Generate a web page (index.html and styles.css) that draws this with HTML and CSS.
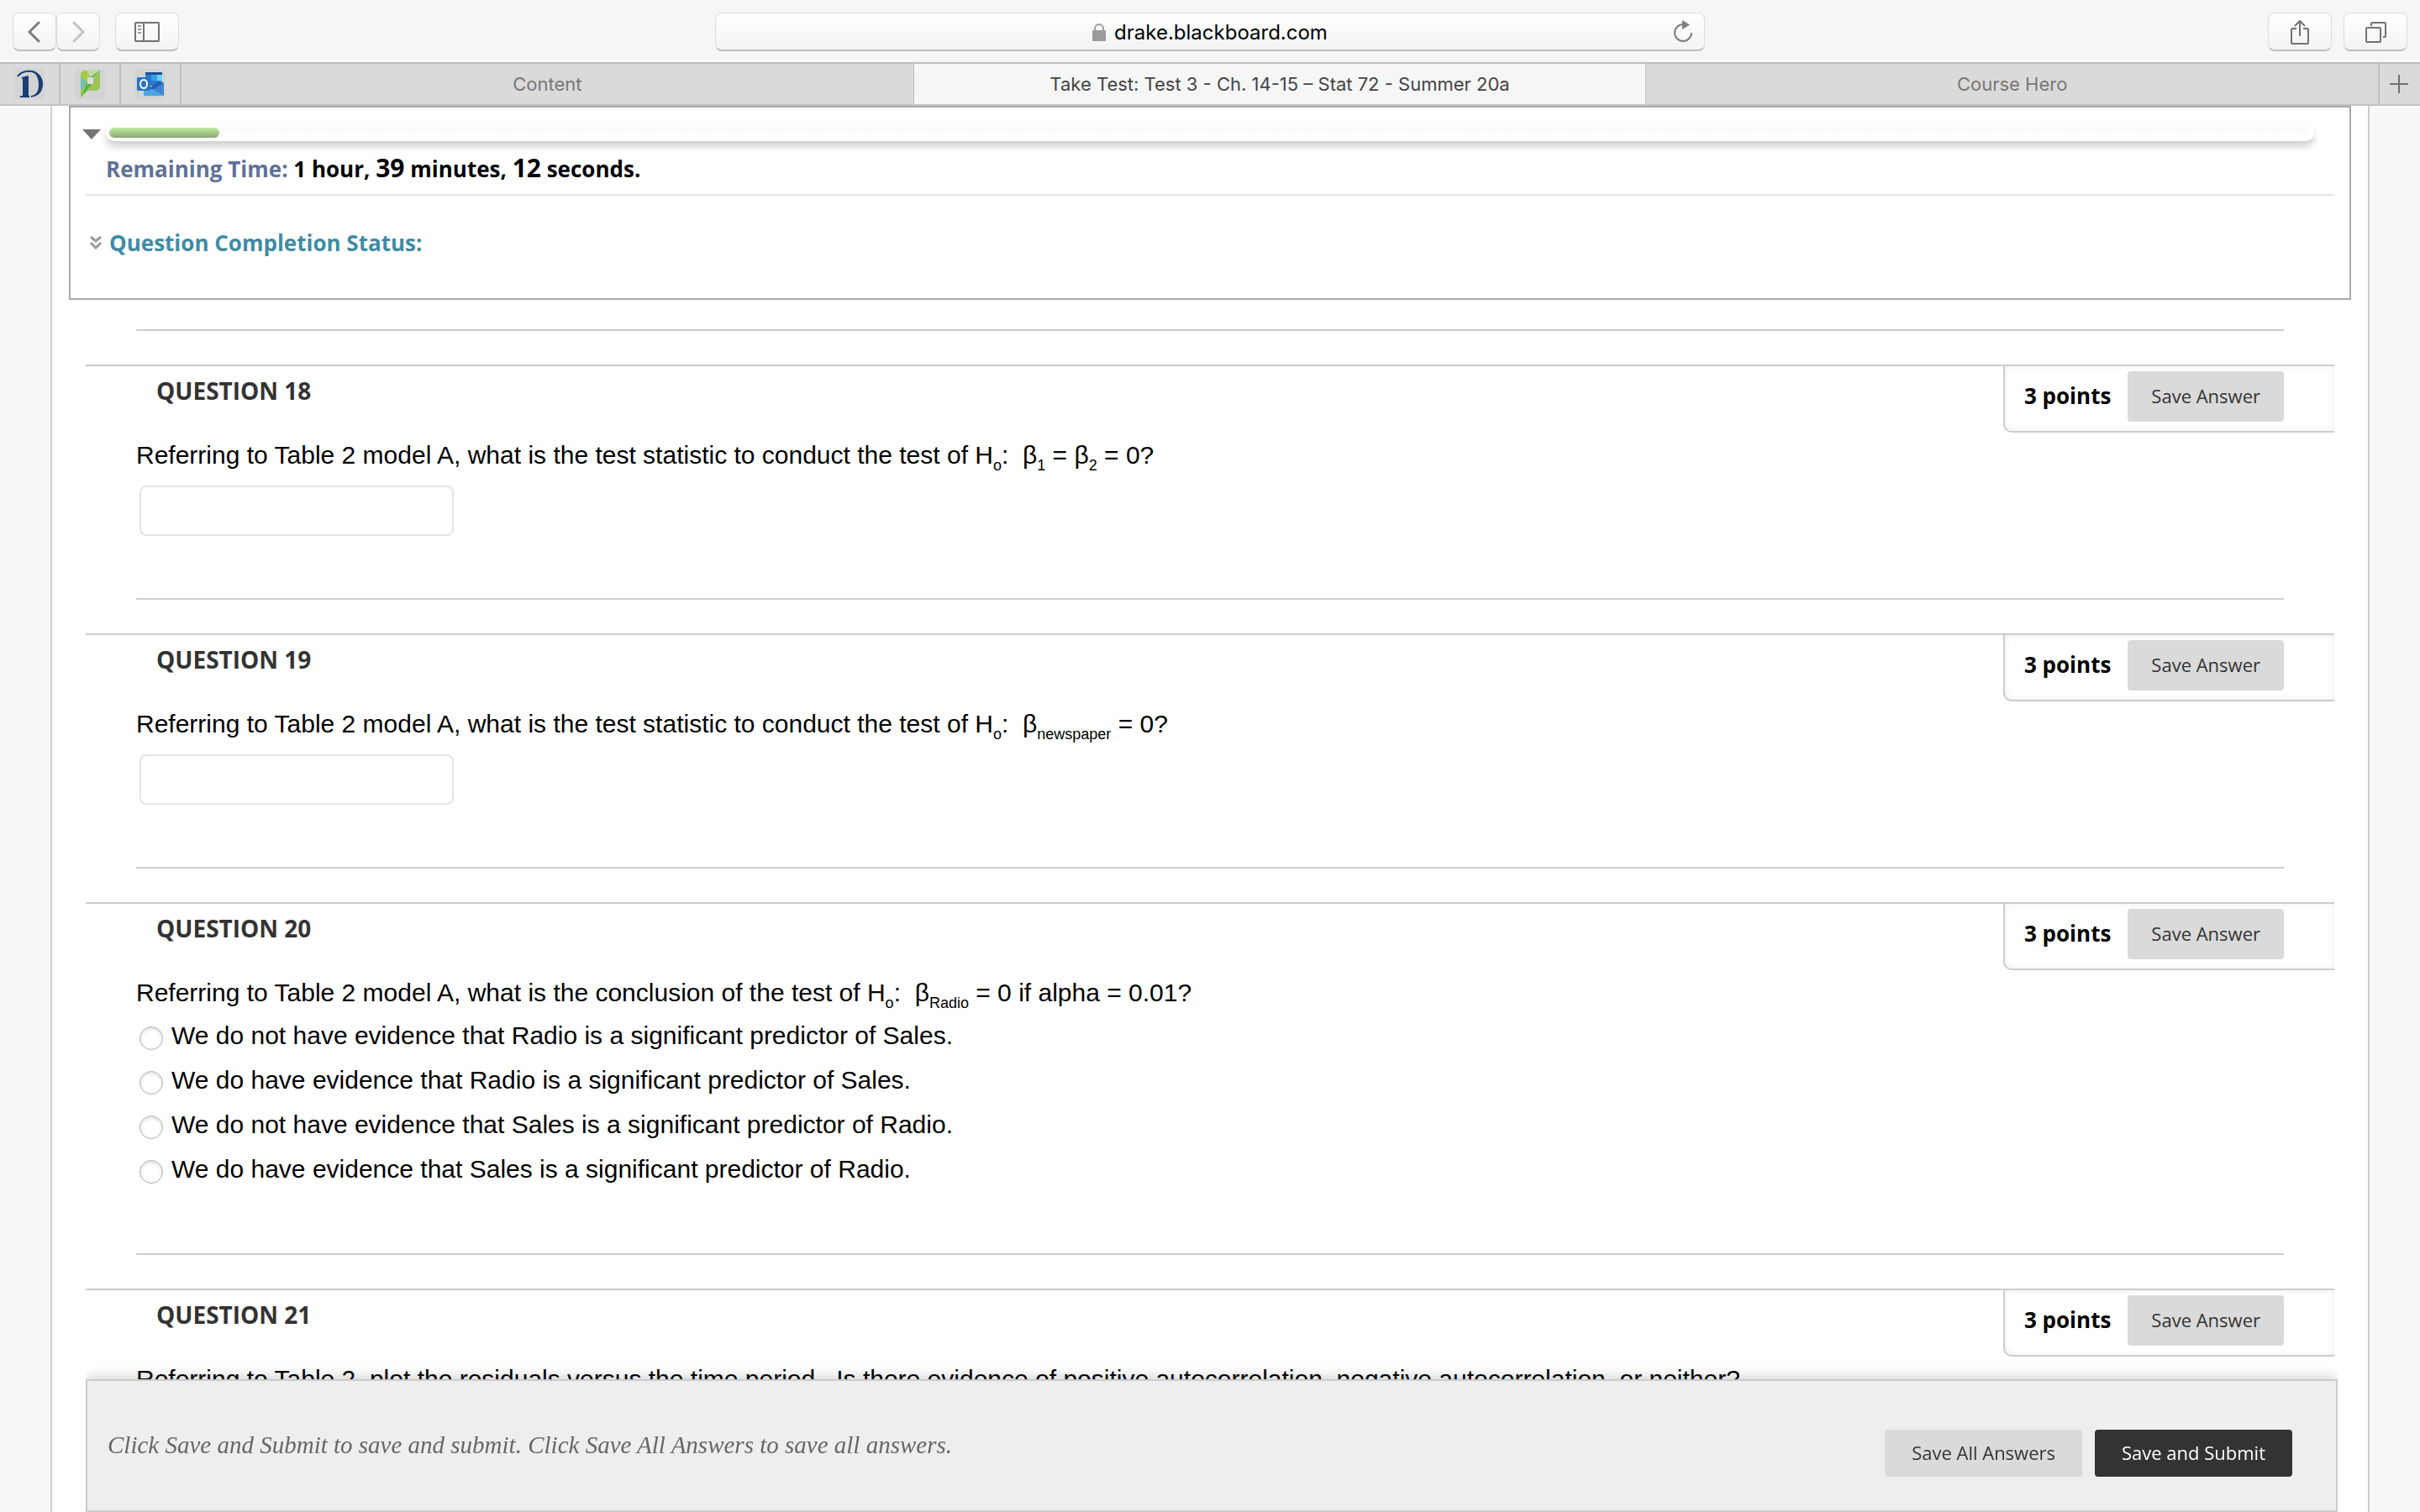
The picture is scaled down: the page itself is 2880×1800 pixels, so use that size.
FILE: index.html
```html
<!DOCTYPE html>
<html lang="en">
<head>
    <meta charset="UTF-8">
    <meta name="viewport" content="width=device-width, initial-scale=1.0">
    <title>Take Test: Test 3 - Ch. 14-15 – Stat 72 - Summer 20a</title>
    <link rel="stylesheet" href="styles.css">
</head>
<body>
    <header class="browser">
        <div class="toolbar">
            <div class="toolbar-side">
                <div class="nav-buttons">
                    <button class="tool-btn small" type="button" aria-label="Back">
                        <svg width="16" height="26" viewBox="0 0 16 26" fill="none" stroke="#7b7b7b" stroke-width="3" stroke-linecap="round" stroke-linejoin="round"><path d="M13 2 2 13l11 11"/></svg>
                    </button>
                    <button class="tool-btn small" type="button" aria-label="Forward">
                        <svg width="16" height="26" viewBox="0 0 16 26" fill="none" stroke="#c2c2c2" stroke-width="3" stroke-linecap="round" stroke-linejoin="round"><path d="M3 2l11 11L3 24"/></svg>
                    </button>
                </div>
                <button class="tool-btn" type="button" aria-label="Sidebar">
                    <svg width="30" height="24" viewBox="0 0 30 24" fill="none" stroke="#727272" stroke-width="2"><rect x="1" y="1" width="28" height="22" rx="1"/><path d="M11 1v22"/><path d="M4 5h4M4 9h4M4 13h4" stroke="#999"/></svg>
                </button>
            </div>
            <div class="address">
                <div class="address-text">
                    <svg width="16" height="22" viewBox="0 0 16 22"><rect x="0" y="8" width="16" height="13" rx="1" fill="#9b9b9b"/><path d="M3 9V6a5 5 0 0 1 10 0v3" fill="none" stroke="#9b9b9b" stroke-width="2"/></svg>
                    <span>drake.blackboard.com</span>
                </div>
                <button class="reload" type="button" aria-label="Reload">
                    <svg width="24" height="28" viewBox="0 0 24 28"><path d="M21 15a10 10 0 1 1-10-10" fill="none" stroke="#7e7e7e" stroke-width="2"/><path d="M10 0l9 5.500-9 5.500z" fill="#7e7e7e"/></svg>
                </button>
            </div>
            <div class="toolbar-side right">
                <button class="tool-btn" type="button" aria-label="Share">
                    <svg width="24" height="32" viewBox="0 0 24 32" fill="none" stroke="#727272" stroke-width="2"><path d="M8 12H3q-1 0-1 1v16q0 1 1 1h18q1 0 1-1V13q0-1-1-1h-5"/><path d="M12 21V3M6 9l6-6 6 6"/></svg>
                </button>
                <button class="tool-btn" type="button" aria-label="Show tabs">
                    <svg width="26" height="26" viewBox="0 0 26 26" fill="none" stroke="#727272" stroke-width="2"><rect x="2" y="8" width="17" height="17" rx="1"/><path d="M8 6V3q0-1 1-1h15q1 0 1 1v15q0 1-1 1h-2"/></svg>
                </button>
            </div>
        </div>
        <nav class="tabs">
            <a class="pinned" href="#" aria-label="Drake">
                <svg width="36" height="36" viewBox="0 0 36 36"><rect width="36" height="36" fill="#d3d3d3"/><rect x="10" y="10" width="7" height="22" fill="#1b3f75"/><path d="M7 33h11M9 11l8-2" stroke="#1b3f75" stroke-width="2"/><path d="M4 9C8 3 16 2 21 3c8 2 12 9 11 17-1 8-6 12-12 13" fill="none" stroke="#1b3f75" stroke-width="2"/><path d="M21 2c9 2 14 10 13 18-1 8-6 13-13 13 6-3 8-8 8-14S27 6 21 2z" fill="#1b3f75"/></svg>
            </a>
            <a class="pinned" href="#" aria-label="Bookmark">
                <svg width="36" height="36" viewBox="0 0 36 36"><rect width="36" height="36" fill="#d3d3d3"/><path d="M7 5l4-3h19v18q0 6-6 6h-9l-8 8z" fill="#9cc653"/><path d="M9 3l9-1-6 12z" fill="#a9c93e"/><path d="M14 2h16L18 10z" fill="#bedb9b"/><path d="M7 10l8 6-8 10z" fill="#74bfae"/><path d="M30 2l-9 8h-3z" fill="#46ab98"/><path d="M7 34l8-18 5 3z" fill="#57b153"/><rect x="15" y="10" width="7" height="8" fill="#ddd"/></svg>
            </a>
            <a class="pinned" href="#" aria-label="Outlook">
                <svg width="36" height="36" viewBox="0 0 36 36"><rect width="36" height="36" fill="#d3d3d3"/><rect x="12" y="4" width="20" height="16" fill="#2d78cc"/><rect x="12" y="4" width="20" height="3" fill="#1b4f96"/><rect x="19" y="7" width="7" height="7" fill="#3d9be8"/><rect x="26" y="7" width="6" height="7" fill="#6bd0fa"/><rect x="26" y="14" width="6" height="5" fill="#3ea5ec"/><path d="M10 18l12 6 12-7v15H10z" fill="#4ea5e2"/><path d="M18 23l16-6v15z" fill="#3a86d0"/><path d="M16 24h6l12-7-6-3-10 8z" fill="#2360ae"/><rect x="2" y="10" width="16" height="16" rx="1" fill="#2a72c9"/><ellipse cx="10" cy="18" rx="4" ry="5" fill="none" stroke="#fff" stroke-width="2"/></svg>
            </a>
            <a class="tab" href="#">Content</a>
            <a class="tab active" href="#">Take Test: Test 3 - Ch. 14-15 – Stat 72 - Summer 20a</a>
            <a class="tab" href="#">Course Hero</a>
            <button class="new-tab" type="button" aria-label="New tab">
                <svg width="22" height="22" viewBox="0 0 22 22" stroke="#707070" stroke-width="2"><path d="M11 0v22M0 11h22"/></svg>
            </button>
        </nav>
    </header>

    <main class="page">
        <section class="timer">
            <div class="timer-bar">
                <button class="toggle" type="button" aria-label="Collapse timer">
                    <svg width="22" height="12" viewBox="0 0 22 12"><path d="M0 0h22L11 12z" fill="#757575"/></svg>
                </button>
                <div class="progress">
                    <div class="progress-fill" style="width: 5%"></div>
                </div>
            </div>
            <p class="remaining"><span class="remaining-label">Remaining Time:</span> 1 hour, <span class="digits">39</span> minutes, <span class="digits">12</span> seconds.</p>
            <a class="status" href="#">
                <svg width="16" height="16" viewBox="0 0 16 16" fill="none" stroke="#999" stroke-width="3"><path d="M2 1l6 5 6-5M2 8l6 6 6-6"/></svg>
                Question Completion Status:
            </a>
        </section>

        <form class="questions" id="test-form">
            <hr class="divider">
            <section class="question">
                <div class="question-head">
                    <h3>QUESTION 18</h3>
                    <div class="points"><strong>3 points</strong><button class="btn" type="button">Save Answer</button></div>
                </div>
                <div class="question-body">
                    <label class="prompt" for="q18">Referring to Table 2 model A, what is the test statistic to conduct the test of H<sub>o</sub>:&nbsp; β<sub>1</sub> = β<sub>2</sub> = 0?</label>
                    <input class="answer" type="text" id="q18">
                </div>
            </section>

            <hr class="divider">
            <section class="question">
                <div class="question-head">
                    <h3>QUESTION 19</h3>
                    <div class="points"><strong>3 points</strong><button class="btn" type="button">Save Answer</button></div>
                </div>
                <div class="question-body">
                    <label class="prompt" for="q19">Referring to Table 2 model A, what is the test statistic to conduct the test of H<sub>o</sub>:&nbsp; β<sub>newspaper</sub> = 0?</label>
                    <input class="answer" type="text" id="q19">
                </div>
            </section>

            <hr class="divider">
            <section class="question">
                <div class="question-head">
                    <h3>QUESTION 20</h3>
                    <div class="points"><strong>3 points</strong><button class="btn" type="button">Save Answer</button></div>
                </div>
                <div class="question-body">
                    <p class="prompt">Referring to Table 2 model A, what is the conclusion of the test of H<sub>o</sub>:&nbsp; β<sub>Radio</sub> = 0 if alpha = 0.01?</p>
                    <div class="options">
                        <div class="option"><input type="radio" name="q20" id="q20-a"><label for="q20-a">We do not have evidence that Radio is a significant predictor of Sales.</label></div>
                        <div class="option"><input type="radio" name="q20" id="q20-b"><label for="q20-b">We do have evidence that Radio is a significant predictor of Sales.</label></div>
                        <div class="option"><input type="radio" name="q20" id="q20-c"><label for="q20-c">We do not have evidence that Sales is a significant predictor of Radio.</label></div>
                        <div class="option"><input type="radio" name="q20" id="q20-d"><label for="q20-d">We do have evidence that Sales is a significant predictor of Radio.</label></div>
                    </div>
                </div>
            </section>

            <hr class="divider">
            <section class="question">
                <div class="question-head">
                    <h3>QUESTION 21</h3>
                    <div class="points"><strong>3 points</strong><button class="btn" type="button">Save Answer</button></div>
                </div>
                <div class="question-body">
                    <p class="prompt">Referring to Table 2, plot the residuals versus the time period.&nbsp; Is there evidence of positive autocorrelation, negative autocorrelation, or neither?</p>
                </div>
            </section>
        </form>
    </main>

    <footer class="submit-bar">
        <p>Click Save and Submit to save and submit. Click Save All Answers to save all answers.</p>
        <div class="submit-buttons">
            <button class="btn" type="button">Save All Answers</button>
            <button class="btn primary" type="submit" form="test-form">Save and Submit</button>
        </div>
    </footer>
</body>
</html>
```
FILE: styles.css
```css
* {
    box-sizing: border-box;
}
body {
    margin: 0;
    height: 100vh;
    display: flex;
    flex-direction: column;
    overflow: hidden;
    background: #f8f8f8;
    color: #000;
    font-family: "Open Sans", sans-serif;
    font-size: 26px;
}
button {
    font-family: inherit;
    cursor: pointer;
}
svg {
    display: block;
}

/* Browser toolbar */
.browser {
    flex: none;
    font-family: Inter, sans-serif;
}
.toolbar {
    display: flex;
    justify-content: space-between;
    padding: 15px 15px 13px;
    background: #f6f6f6;
}
.toolbar-side {
    display: flex;
    flex: 1 1 0;
    gap: 18px;
}
.toolbar-side.right {
    justify-content: flex-end;
    gap: 14px;
}
.nav-buttons {
    display: flex;
}
.tool-btn, .address {
    height: 46px;
    border: 1px solid #dcdcdc;
    border-bottom: 2px solid #bebebe;
    border-radius: 8px;
    background: linear-gradient(#fff, #f3f3f3);
}
.tool-btn {
    display: flex;
    align-items: center;
    justify-content: center;
    width: 76px;
    padding: 0;
}
.tool-btn.small {
    width: 52px;
}
.address {
    display: flex;
    align-items: center;
    width: 41.34%;
    padding: 0 12px;
}
.address-text {
    display: flex;
    flex: 1;
    justify-content: center;
    align-items: center;
    gap: 10px;
    padding: 2px 0 0 24px;
    font-size: 24px;
}
.reload {
    padding: 0;
    border: 0;
    background: none;
}

/* Tabs */
.tabs {
    display: flex;
    height: 52px;
    border-top: 2px solid #bdbdbd;
    border-bottom: 2px solid #c2c2c2;
    background: #dadada;
}
.pinned {
    width: 72px;
    padding: 6px 0 0 17px;
    border-right: 2px solid #bfbfbf;
}
.tab {
    flex: 1 1 0;
    color: #777;
    font-size: 22px;
    line-height: 48px;
    text-align: center;
    text-decoration: none;
}
.tab.active {
    border-left: 1px solid #bfbfbf;
    border-right: 1px solid #bfbfbf;
    background: #f6f6f6;
    color: #444;
}
.new-tab {
    display: flex;
    align-items: center;
    width: 50px;
    padding: 0 0 0 12px;
    border: 0;
    border-left: 2px solid #bfbfbf;
    background: none;
}

/* Test page */
.page {
    flex: 1;
    min-height: 0;
    overflow: hidden;
    margin: 0 60px;
    padding: 0 20px;
    border-left: 2px solid #ccc;
    border-right: 2px solid #ccc;
    background: #fff;
}
.timer {
    padding: 20px 18px 48px;
    border: 2px solid #a9a9a9;
}
.timer-bar {
    display: flex;
    align-items: center;
    gap: 6px;
    padding: 0 24px 0 0;
}
.toggle {
    padding: 4px 0 0;
    border: 0;
    background: none;
    margin-left: -4px;
}
.progress {
    flex: 1;
    height: 20px;
    padding: 4px;
    border-radius: 10px;
    background: linear-gradient(#fafafa, #fff) content-box, #fff;
    box-shadow: 0 6px 10px rgba(0, 0, 0, 0.2);
}
.progress-fill {
    height: 12px;
    border-radius: 6px;
    background: linear-gradient(#bfee9d, #8aa873);
}
.remaining {
    margin: 0;
    padding: 12px 0 10px 24px;
    border-bottom: 2px solid #e4e4e4;
    font-weight: bold;
    line-height: 40px;
}
.remaining-label {
    color: #5f7199;
}
.digits {
    font-size: 30px;
}
.status {
    display: flex;
    align-items: center;
    gap: 8px;
    margin-top: 38px;
    padding-left: 4px;
    color: #3f8ba3;
    font-weight: bold;
    line-height: 36px;
    text-decoration: none;
}

/* Questions */
.questions {
    padding: 0 20px;
}
.divider {
    height: 2px;
    margin: 0 60px 40px;
    border: 0;
    background: #ccc;
}
.questions > .divider:first-child {
    margin-top: 35px;
}
.question {
    border-top: 2px solid #ccc;
}
.question-head {
    display: flex;
    justify-content: space-between;
    align-items: flex-start;
    height: 84px;
}
h3 {
    margin: 9px 0 0 84px;
    color: #333;
    font-size: 28px;
    line-height: 40px;
}
.points {
    display: flex;
    align-items: center;
    gap: 20px;
    padding: 6px 60px 11px 23px;
    border-left: 2px solid #ccc;
    border-bottom: 2px solid #ccc;
    border-bottom-left-radius: 10px;
    box-shadow: inset 0 0 8px #eee;
}
.points strong {
    padding-bottom: 2px;
}
.btn {
    height: 60px;
    padding: 0 28px 2px;
    border: 0;
    border-radius: 4px;
    background: #dadada;
    color: #333;
    font-size: 22px;
}
.question-body {
    display: flex;
    flex-direction: column;
    align-items: flex-start;
    padding: 0 60px 74px;
    font-family: "Liberation Sans", sans-serif;
    font-size: 30px;
}
.prompt {
    margin: 0;
    line-height: 44px;
}
sub {
    font-size: 18px;
    line-height: 0;
    vertical-align: -8px;
}
.answer {
    width: 374px;
    height: 60px;
    margin: 14px 4px 0;
    padding: 0 12px;
    border: 2px solid #e4e4e4;
    border-radius: 8px;
    font-size: 26px;
}
.options {
    padding: 2px 0 0 4px;
}
.option {
    display: flex;
    align-items: center;
    gap: 10px;
    height: 53px;
}
.option input {
    appearance: none;
    width: 28px;
    height: 28px;
    margin: 6px 0 0;
    border: 1px solid #b0b0b0;
    border-radius: 50%;
    background: #fff;
    box-shadow: inset 0 2px 4px #ddd;
}

/* Save and submit bar */
.submit-bar {
    position: fixed;
    left: 102px;
    right: 98px;
    bottom: 0;
    display: flex;
    justify-content: space-between;
    padding: 58px 52px 40px 24px;
    border: 2px solid #ccc;
    background: #eee;
    box-shadow: 0 0 16px rgba(0, 0, 0, 0.25);
    clip-path: inset(-30px 0 0 0);
}
.submit-bar p {
    margin: 0;
    color: #666;
    font-family: Georgia, "Liberation Serif", serif;
    font-size: 29px;
    font-style: italic;
    line-height: 36px;
}
.submit-buttons {
    display: flex;
    gap: 15px;
}
.submit-buttons .btn {
    height: 56px;
    padding: 0 32px 2px;
}
.btn.primary {
    background: #333;
    color: #fff;
}
```
